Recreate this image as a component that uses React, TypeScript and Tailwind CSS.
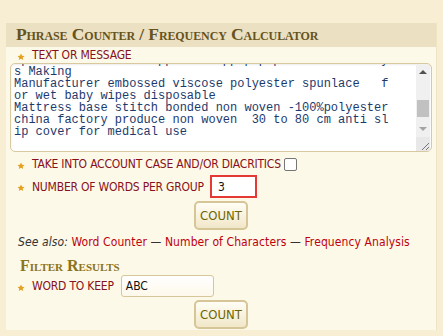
import React from 'react';

const labelFont = "font-['DejaVu_Sans_Condensed','DejaVu_Sans',sans-serif]";

function Star() {
    return (
        <svg width="8" height="8" viewBox="0 0 24 24" className="mt-[3px] shrink-0">
            <path
                d="M12 1.5l3.2 6.6 7.3.8-5.4 5 1.5 7.2L12 17.5l-6.6 3.6 1.5-7.2-5.4-5 7.3-.8z"
                fill="#e4a020"
            />
        </svg>
    );
}

function Label({ children }: { children: React.ReactNode }) {
    return (
        <div className="flex items-center gap-[7px]">
            <Star />
            <span className={`${labelFont} text-[12px] leading-[14px] tracking-[-0.2px] text-[#861020]`}>
                {children}
            </span>
        </div>
    );
}

function CountButton() {
    return (
        <div className="flex justify-center">
            <button
                className={`${labelFont} h-[29px] w-[54px] rounded-[5px] border-2 border-[#d6c596] bg-gradient-to-b from-[#fffdf5] to-[#f1e7c9] text-[13px] text-[#6e6600]`}>
                COUNT
            </button>
        </div>
    );
}

const lines = [
    'spunlace nonwoven supplier wipp pap p   Cosmetic dry',
    's Making',
    'Manufacturer embossed viscose polyester spunlace   f',
    'or wet baby wipes disposable',
    'Mattress base stitch bonded non woven -100%polyester',
    'china factory produce non woven  30 to 80 cm anti sl',
    'ip cover for medical use',
];

export default function App() {
    return (
        <div className="min-h-[336px] w-[443px] bg-[#f8eed4] pt-[23px]">
            <div className="ml-[6px] w-[431px] border-r border-[#efe4c4]">
                <div className="flex h-[24px] items-center bg-[#ebe0c2] pl-[10px]">
                    <h1 className="font-['Liberation_Serif',serif] text-[17.5px] font-bold leading-none tracking-[-0.1px] text-[#665320] [font-variant:small-caps]">
                        Phrase Counter / Frequency Calculator
                    </h1>
                </div>
                <div className="bg-[#fdf9e9] pb-[1px]">
                    <div className="pl-[11px] pt-[1px]">
                        <Label>TEXT OR MESSAGE</Label>
                    </div>
                    <div className="mx-[4px] mt-[1px] flex h-[89px] overflow-hidden rounded-[5px] border border-[#d8c9a0] bg-white shadow-[inset_0_1px_2px_rgba(0,0,0,0.08)]">
                        <div className="flex-1 overflow-hidden pl-[3px]">
                            <div className="-mt-[10px] whitespace-pre font-['Liberation_Mono',monospace] text-[12px] leading-[12px] text-[#1d3a6c]">
                                {lines.map((l, i) => (
                                    <div key={i}>{l}</div>
                                ))}
                            </div>
                        </div>
                        <div className="mr-[1px] mt-[1px] flex w-[14px] flex-col bg-[#f0f0f0]">
                            <div className="flex h-[14px] items-center justify-center">
                                <div className="h-0 w-0 border-x-[4px] border-b-[4px] border-x-transparent border-b-[#505050]" />
                            </div>
                            <div className="mx-[1px] mt-[21px] h-[17px] bg-[#c1c1c1]" />
                            <div className="mt-[5px] flex h-[14px] items-center justify-center">
                                <div className="h-0 w-0 border-x-[4px] border-t-[4px] border-x-transparent border-t-[#a3a3a3]" />
                            </div>
                            <div className="flex-1" />
                            <div className="relative h-[14px] bg-[#e8e8e8]">
                                <svg width="12" height="12" viewBox="0 0 12 12" className="absolute bottom-0 right-0">
                                    <path d="M11 4L4 11M11 8L8 11" stroke="#777" strokeWidth="1" />
                                </svg>
                            </div>
                        </div>
                    </div>
                    <div className="mt-[5px] flex items-center pl-[11px]">
                        <Label>TAKE INTO ACCOUNT CASE AND/OR DIACRITICS</Label>
                        <div className="ml-[3px] h-[13px] w-[13px] rounded-[2px] border border-[#767676] bg-white" />
                    </div>
                    <div className="mt-[4px] flex items-center pl-[11px]">
                        <Label>NUMBER OF WORDS PER GROUP</Label>
                        <div className="ml-[6px] flex h-[23px] w-[47px] items-center border-2 border-[#e53935] bg-white pl-[6px]">
                            <span className={`${labelFont} text-[12px] text-[#111]`}>3</span>
                        </div>
                    </div>
                    <div className="mt-[3px]">
                        <CountButton />
                    </div>
                    <div className={`${labelFont} mt-[5px] pl-[12px] text-[12px] leading-[14px] tracking-[0.1px]`}>
                        <span className="italic text-[#333]">See also: </span>
                        <span className="text-[#c0000c]">Word Counter</span>
                        <span className="text-[#333]"> — </span>
                        <span className="text-[#c0000c]">Number of Characters</span>
                        <span className="text-[#333]"> — </span>
                        <span className="text-[#c0000c]">Frequency Analysis</span>
                    </div>
                    <h2 className="mt-[9px] pl-[14px] font-['Liberation_Serif',serif] text-[16px] font-bold leading-[16px] text-[#8a7420] [font-variant:small-caps]">
                        Filter Results
                    </h2>
                    <div className="mt-[1px] flex items-center pl-[11px]">
                        <Label>WORD TO KEEP</Label>
                        <div className="ml-[7px] flex h-[22px] w-[93px] items-center rounded-[3px] border border-[#d6c69a] bg-gradient-to-b from-white to-[#fdf8ea] pl-[4px]">
                            <span className={`${labelFont} text-[12px] text-[#111]`}>ABC</span>
                        </div>
                    </div>
                    <div className="mt-[3px]">
                        <CountButton />
                    </div>
                </div>
            </div>
        </div>
    );
}
